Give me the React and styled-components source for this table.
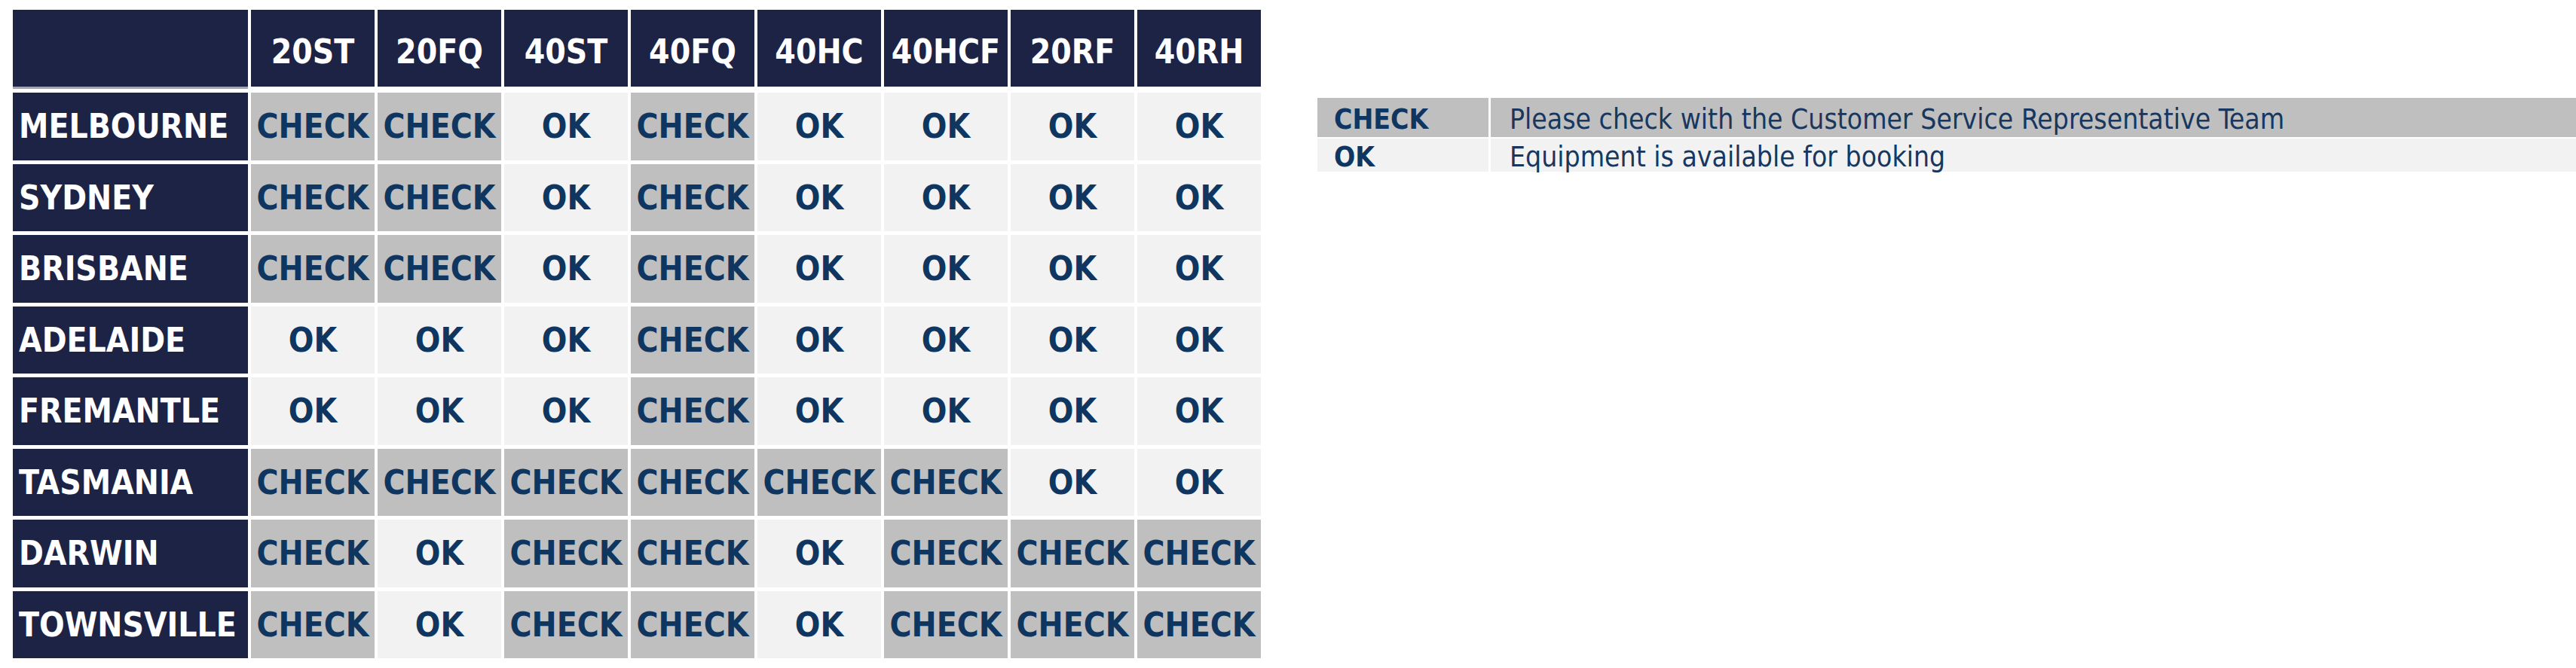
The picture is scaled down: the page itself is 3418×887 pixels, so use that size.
import React from 'react';
import styled, { createGlobalStyle } from 'styled-components';

const GlobalStyle = createGlobalStyle`
  html, body {
    margin: 0;
    padding: 0;
    background: #ffffff;
  }
  body {
    font-family: "DejaVu Sans Condensed", "DejaVu Sans", sans-serif;
    font-stretch: condensed;
  }
`

const PageSC = styled.div`
  display: flex;
  align-items: flex-start;
  padding: 13px 0 0 17px;
  width: 3418px;
  box-sizing: border-box;
`

const TableSC = styled.div`
  display: grid;
  grid-template-columns: 312px repeat(8, 164px);
  grid-template-rows: 105px repeat(8, 89.5px);
  column-gap: 4px;
  row-gap: 5px;
  flex: none;
`

const HeadCellSC = styled.div`
  display: flex;
  align-items: center;
  justify-content: center;
  padding-top: 8px;
  background: #1d2345;
  border-bottom: 3px solid ${p => (p.corner ? '#a2a5b0' : '#ffffff')};
  color: #ffffff;
  font-weight: bold;
  font-size: 44px;
  box-sizing: border-box;
`

const PortCellSC = styled.div`
  display: flex;
  align-items: center;
  padding-left: 8px;
  background: #1d2345;
  color: #ffffff;
  font-weight: bold;
  font-size: 44px;
`

const StatusCellSC = styled.div`
  display: flex;
  align-items: center;
  justify-content: center;
  background: ${p => (p.status === 'CHECK' ? '#bfbfbf' : '#f2f2f2')};
  color: #0f3660;
  font-weight: bold;
  font-size: 44px;
`

const LegendSC = styled.div`
  flex: 1;
  display: grid;
  grid-template-columns: 227px 1fr;
  grid-template-rows: 52px 44px;
  column-gap: 3px;
  row-gap: 2px;
  margin: 117px 0 0 75px;
`

const LegendKeySC = styled.div`
  display: flex;
  align-items: center;
  padding: 4px 0 0 22px;
  background: ${p => (p.status === 'CHECK' ? '#bfbfbf' : '#f2f2f2')};
  color: #0f3660;
  font-weight: bold;
  font-size: 37px;
`

const LegendTextSC = styled(LegendKeySC)`
  padding-left: 25px;
  font-weight: normal;
  color: #17375e;
`

const sizes = ['20ST', '20FQ', '40ST', '40FQ', '40HC', '40HCF', '20RF', '40RH']

const ports = [
  ['MELBOURNE', 'CCOCOOOO'],
  ['SYDNEY', 'CCOCOOOO'],
  ['BRISBANE', 'CCOCOOOO'],
  ['ADELAIDE', 'OOOCOOOO'],
  ['FREMANTLE', 'OOOCOOOO'],
  ['TASMANIA', 'CCCCCCOO'],
  ['DARWIN', 'COCCOCCC'],
  ['TOWNSVILLE', 'COCCOCCC'],
]

const legend = [
  ['CHECK', 'Please check with the Customer Service Representative Team'],
  ['OK', 'Equipment is available for booking'],
]

export default function App() {
  return (
    <PageSC>
      <GlobalStyle />
      <TableSC>
        <HeadCellSC corner />
        {sizes.map(s => <HeadCellSC key={s}>{s}</HeadCellSC>)}
        {ports.map(([port, row]) => (
          <React.Fragment key={port}>
            <PortCellSC>{port}</PortCellSC>
            {row.split('').map((c, i) => {
              const status = c === 'C' ? 'CHECK' : 'OK'
              return <StatusCellSC key={i} status={status}>{status}</StatusCellSC>
            })}
          </React.Fragment>
        ))}
      </TableSC>

      <LegendSC>
        {legend.map(([key, text]) => (
          <React.Fragment key={key}>
            <LegendKeySC status={key}>{key}</LegendKeySC>
            <LegendTextSC status={key}>{text}</LegendTextSC>
          </React.Fragment>
        ))}
      </LegendSC>
    </PageSC>
  )
}
